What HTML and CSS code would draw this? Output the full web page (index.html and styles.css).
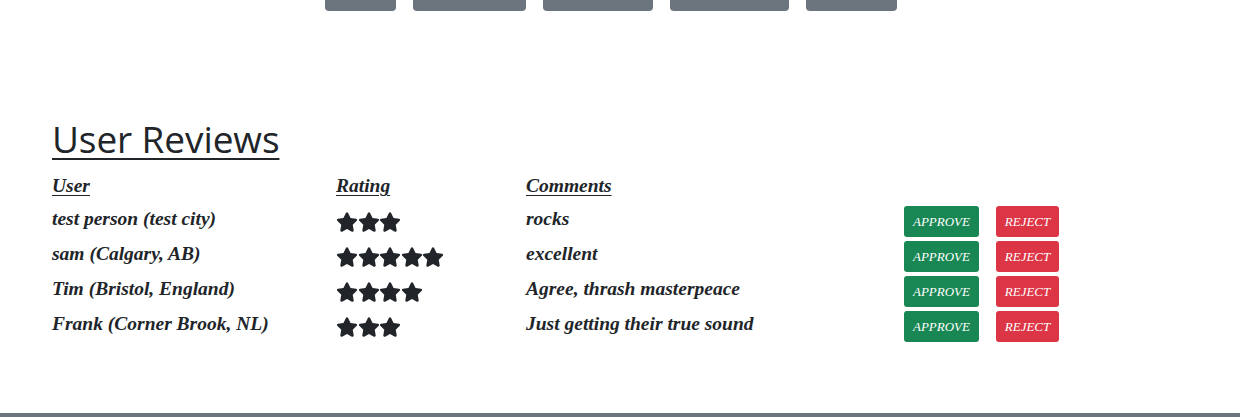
FILE: index.html
```html
<!DOCTYPE html>
<html>
<head>
<meta charset="utf-8">
<link rel="stylesheet" href="styles.css">
</head>
<body>
<svg class="defs" width="0" height="0">
  <symbol id="star" viewBox="0 0 576 512"><path fill="#212529" d="M316.9 18C311.6 7 300.4 0 288.1 0s-23.4 7-28.8 18L195 150.3 51.4 171.5c-12 1.8-22 10.2-25.7 21.7s-.7 24.2 7.9 32.7L137.8 329 113.2 474.7c-2 12 3 24.2 12.9 31.3s23 8 33.8 2.3l128.3-68.5 128.3 68.5c10.8 5.7 23.9 4.9 33.8-2.3s14.9-19.3 12.9-31.3L438.5 329 542.7 225.9c8.6-8.5 11.700-21.2 7.900-32.7s-13.700-19.9-25.700-21.7L381.2 150.3 316.9 18z"/></symbol>
</svg>
<div class="page">
  <nav class="topnav">
    <span class="navbtn w1"></span>
    <span class="navbtn w2"></span>
    <span class="navbtn w3"></span>
    <span class="navbtn w4"></span>
    <span class="navbtn w5"></span>
  </nav>
  <section class="reviews">
    <h1 class="title">User Reviews</h1>
    <div class="grid">
      <div class="hd">User</div><div class="hd">Rating</div><div class="hd">Comments</div><div></div>

      <div class="cell txt">test person (test city)</div>
      <div class="cell stars"><svg class="star"><use href="#star"/></svg><svg class="star"><use href="#star"/></svg><svg class="star"><use href="#star"/></svg></div>
      <div class="cell txt">rocks</div>
      <div class="cell actions"><button class="btn approve">APPROVE</button><button class="btn reject">REJECT</button></div>

      <div class="cell txt">sam (Calgary, AB)</div>
      <div class="cell stars"><svg class="star"><use href="#star"/></svg><svg class="star"><use href="#star"/></svg><svg class="star"><use href="#star"/></svg><svg class="star"><use href="#star"/></svg><svg class="star"><use href="#star"/></svg></div>
      <div class="cell txt">excellent</div>
      <div class="cell actions"><button class="btn approve">APPROVE</button><button class="btn reject">REJECT</button></div>

      <div class="cell txt">Tim (Bristol, England)</div>
      <div class="cell stars"><svg class="star"><use href="#star"/></svg><svg class="star"><use href="#star"/></svg><svg class="star"><use href="#star"/></svg><svg class="star"><use href="#star"/></svg></div>
      <div class="cell txt">Agree, thrash masterpeace</div>
      <div class="cell actions"><button class="btn approve">APPROVE</button><button class="btn reject">REJECT</button></div>

      <div class="cell txt">Frank (Corner Brook, NL)</div>
      <div class="cell stars"><svg class="star"><use href="#star"/></svg><svg class="star"><use href="#star"/></svg><svg class="star"><use href="#star"/></svg></div>
      <div class="cell txt">Just getting their true sound</div>
      <div class="cell actions"><button class="btn approve">APPROVE</button><button class="btn reject">REJECT</button></div>
    </div>
  </section>
  <footer class="footbar"></footer>
</div>
</body>
</html>
```
FILE: styles.css
```css
* { box-sizing: border-box; }
html, body { margin: 0; padding: 0; background: #fff; }
body { font-family: "Liberation Serif", serif; color: #212529; }
.defs { position: absolute; width: 0; height: 0; overflow: hidden; }
.page { min-height: 417px; height: 417px; display: flex; flex-direction: column; }
.topnav { display: flex; gap: 17px; padding-left: 325px; height: 11px; }
.navbtn { display: block; height: 11px; background: #6c757d; border-radius: 0 0 4px 4px; }
.w1 { width: 71px; } .w2 { width: 113px; } .w3 { width: 110px; } .w4 { width: 119px; } .w5 { width: 91px; }
.reviews { padding-left: 52px; padding-top: 104px; }
.title { margin: 0; font-family: "Open Sans", sans-serif; font-weight: 400; font-size: 37px; line-height: 48px; text-decoration: underline; text-decoration-thickness: 2px; text-underline-offset: 5px; letter-spacing: -0.1px; }
.grid { display: grid; grid-template-columns: 284px 190px 378px auto; margin-top: 10px; font-style: italic; font-weight: 700; font-size: 19.5px; }
.hd { height: 31px; line-height: 26px; text-decoration: underline; text-decoration-thickness: 1px; text-underline-offset: 3px; }
.cell { height: 35px; display: flex; align-items: center; }
.txt { padding-bottom: 5px; }
.star { display: block; width: 22px; height: 20px; margin-right: -0.5px; }
.actions { gap: 17px; }
.btn { height: 31px; border: none; border-radius: 3px; color: #fff; font-family: "Liberation Serif", serif; font-style: italic; font-size: 13px; padding: 0; }
.approve { background: #198754; width: 75px; }
.reject { background: #dc3545; width: 63px; }
.footbar { margin-top: auto; height: 4px; background: #6c757d; }
```
